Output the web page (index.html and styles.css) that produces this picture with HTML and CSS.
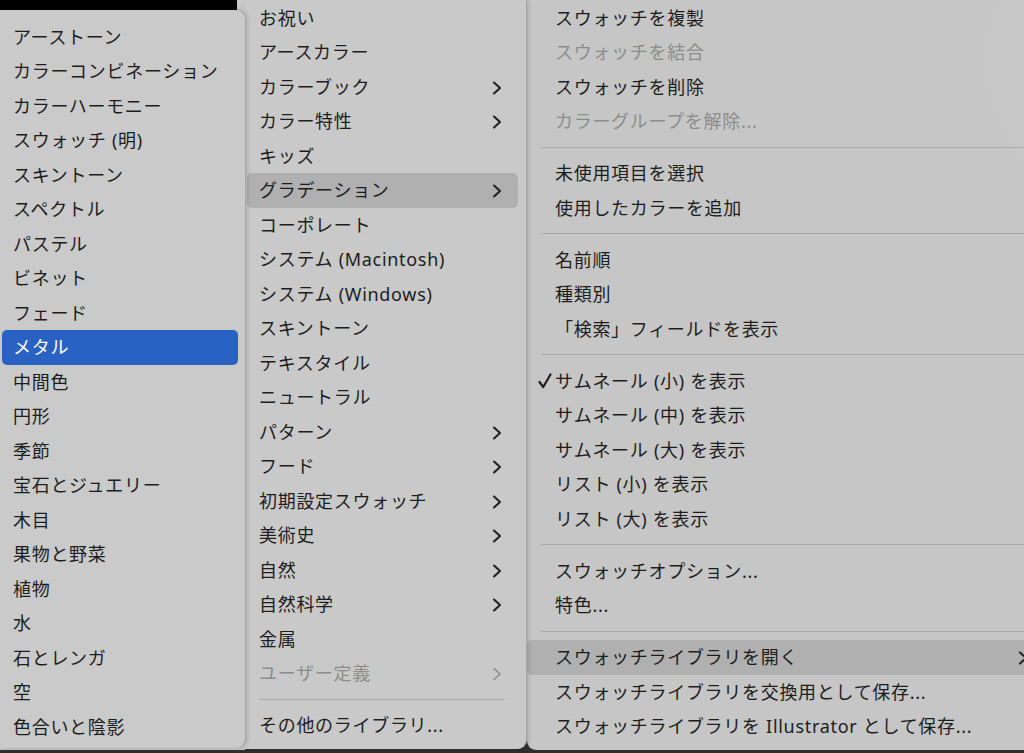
FILE: index.html
```html
<!DOCTYPE html>
<html lang="ja">
<head>
<meta charset="utf-8">
<title>スウォッチメニュー</title>
<link rel="stylesheet" href="styles.css">
</head>
<body>
<div class="screen">
  <div class="col-left">
    <div class="topbar"></div>
    <ul class="menu menu-left">
      <li class="item">アーストーン</li>
      <li class="item">カラーコンビネーション</li>
      <li class="item">カラーハーモニー</li>
      <li class="item">スウォッチ (明)</li>
      <li class="item">スキントーン</li>
      <li class="item">スペクトル</li>
      <li class="item">パステル</li>
      <li class="item">ビネット</li>
      <li class="item">フェード</li>
      <li class="item selected">メタル</li>
      <li class="item">中間色</li>
      <li class="item">円形</li>
      <li class="item">季節</li>
      <li class="item">宝石とジュエリー</li>
      <li class="item">木目</li>
      <li class="item">果物と野菜</li>
      <li class="item">植物</li>
      <li class="item">水</li>
      <li class="item">石とレンガ</li>
      <li class="item">空</li>
      <li class="item">色合いと陰影</li>
    </ul>
  </div>
  <ul class="menu menu-mid">
    <li class="item">お祝い</li>
    <li class="item">アースカラー</li>
    <li class="item sub">カラーブック<svg class="chev" viewBox="0 0 10 14"><polyline points="2,1.5 8,7 2,12.5"/></svg></li>
    <li class="item sub">カラー特性<svg class="chev" viewBox="0 0 10 14"><polyline points="2,1.5 8,7 2,12.5"/></svg></li>
    <li class="item">キッズ</li>
    <li class="item sub hover">グラデーション<svg class="chev" viewBox="0 0 10 14"><polyline points="2,1.5 8,7 2,12.5"/></svg></li>
    <li class="item">コーポレート</li>
    <li class="item">システム (Macintosh)</li>
    <li class="item">システム (Windows)</li>
    <li class="item">スキントーン</li>
    <li class="item">テキスタイル</li>
    <li class="item">ニュートラル</li>
    <li class="item sub">パターン<svg class="chev" viewBox="0 0 10 14"><polyline points="2,1.5 8,7 2,12.5"/></svg></li>
    <li class="item sub">フード<svg class="chev" viewBox="0 0 10 14"><polyline points="2,1.5 8,7 2,12.5"/></svg></li>
    <li class="item sub">初期設定スウォッチ<svg class="chev" viewBox="0 0 10 14"><polyline points="2,1.5 8,7 2,12.5"/></svg></li>
    <li class="item sub">美術史<svg class="chev" viewBox="0 0 10 14"><polyline points="2,1.5 8,7 2,12.5"/></svg></li>
    <li class="item sub">自然<svg class="chev" viewBox="0 0 10 14"><polyline points="2,1.5 8,7 2,12.5"/></svg></li>
    <li class="item sub">自然科学<svg class="chev" viewBox="0 0 10 14"><polyline points="2,1.5 8,7 2,12.5"/></svg></li>
    <li class="item">金属</li>
    <li class="item sub disabled">ユーザー定義<svg class="chev" viewBox="0 0 10 14"><polyline points="2,1.5 8,7 2,12.5"/></svg></li>
    <li class="sep"></li>
    <li class="item">その他のライブラリ...</li>
  </ul>
  <ul class="menu menu-right">
    <li class="item">スウォッチを複製</li>
    <li class="item disabled">スウォッチを結合</li>
    <li class="item">スウォッチを削除</li>
    <li class="item disabled">カラーグループを解除...</li>
    <li class="sep"></li>
    <li class="item">未使用項目を選択</li>
    <li class="item">使用したカラーを追加</li>
    <li class="sep"></li>
    <li class="item">名前順</li>
    <li class="item">種類別</li>
    <li class="item">「検索」フィールドを表示</li>
    <li class="sep"></li>
    <li class="item checked"><svg class="check" viewBox="0 0 14 16"><polyline points="1.5,9 5.2,14 12.5,1.5"/></svg>サムネール (小) を表示</li>
    <li class="item">サムネール (中) を表示</li>
    <li class="item">サムネール (大) を表示</li>
    <li class="item">リスト (小) を表示</li>
    <li class="item">リスト (大) を表示</li>
    <li class="sep"></li>
    <li class="item">スウォッチオプション...</li>
    <li class="item">特色...</li>
    <li class="sep"></li>
    <li class="item sub hover">スウォッチライブラリを開く<svg class="chev" viewBox="0 0 10 14"><polyline points="2,1.5 8,7 2,12.5"/></svg></li>
    <li class="item">スウォッチライブラリを交換用として保存...</li>
    <li class="item">スウォッチライブラリを Illustrator として保存...</li>
  </ul>
</div>
</body>
</html>
```

FILE: styles.css
```css
html, body {
  margin: 0;
  padding: 0;
}

body {
  width: 1024px;
  height: 753px;
  overflow: hidden;
  background: #303030;
  font-family: "Noto Sans", "Noto Sans CJK JP", sans-serif;
  font-size: 18px;
  letter-spacing: 0.7px;
  color: #1d1d1d;
}

.screen {
  display: flex;
  width: 1024px;
  height: 750px;
  align-items: stretch;
}

.menu {
  list-style: none;
  margin: 0;
  padding: 0;
  box-sizing: border-box;
}

.item {
  position: relative;
  display: flex;
  align-items: center;
  height: 34.5px;
  line-height: 34.5px;
  white-space: nowrap;
  border-radius: 5px;
}

.sep {
  height: 17.5px;
  display: flex;
  align-items: center;
}

.sep::before {
  content: "";
  display: block;
  height: 1px;
  width: 100%;
  background: #a9aaa9;
}

.disabled {
  color: #8c8d8c;
}

.hover {
  background: #afb0af;
}

.chev {
  position: absolute;
  right: 16px;
  top: 11px;
  width: 10px;
  height: 14px;
  fill: none;
  stroke: #222;
  stroke-width: 2.1;
  stroke-linecap: round;
  stroke-linejoin: round;
}

.disabled .chev {
  stroke: #8c8d8c;
  stroke-width: 1.6;
}

.check {
  position: absolute;
  left: 11px;
  top: 9px;
  width: 14px;
  height: 16px;
  fill: none;
  stroke: #1e1e1e;
  stroke-width: 2.2;
  stroke-linecap: round;
  stroke-linejoin: round;
}

/* left column */
.col-left {
  width: 245px;
  flex: none;
  display: flex;
  flex-direction: column;
  background: #c6c7c6;
  position: relative;
  z-index: 3;
}

.topbar {
  height: 10px;
  width: 237px;
  background: #000;
  flex: none;
}

.menu-left {
  flex: 1;
  margin-bottom: 2px;
  padding: 9.5px 7px 0 2px;
  background: #c9cac9;
  border-radius: 0 9px 9px 0;
  box-shadow: 1px 0 0 #a4a5a4, 2px 0 5px rgba(0, 0, 0, 0.18);
}

.menu-left .item {
  padding-left: 11px;
}

.menu-left .selected {
  background: #2a62c4;
  color: #fff;
}

/* middle column */
.menu-mid {
  width: 281px;
  flex: none;
  padding: 0.5px 8px 0 2px;
  margin-bottom: 1px;
  background: #c8c9c8;
  border-radius: 0 0 9px 0;
  box-shadow: 1px 0 0 #a4a5a4, 2px 0 5px rgba(0, 0, 0, 0.18);
  position: relative;
  z-index: 2;
}

.menu-mid .item {
  padding-left: 12px;
}

.menu-mid .sep {
  padding: 0 13px 0 12px;
}

/* right column */
.menu-right {
  flex: 1;
  padding: 0.5px 0 0 0;
  margin-left: 1px;
  background:
    radial-gradient(ellipse 120px 160px at 1010px 500px, rgba(214, 196, 190, 0.55), rgba(214, 196, 190, 0)),
    radial-gradient(ellipse 260px 200px at 700px 60px, rgba(210, 211, 210, 0.5), rgba(210, 211, 210, 0)),
    #c5c6c5;
  border-radius: 0 0 0 9px;
  position: relative;
  z-index: 1;
}

.menu-right .item {
  padding-left: 28px;
  border-radius: 5px 0 0 5px;
}

.menu-right .sep {
  padding-left: 14px;
}

.menu-right .chev {
  right: -4px;
}
```
